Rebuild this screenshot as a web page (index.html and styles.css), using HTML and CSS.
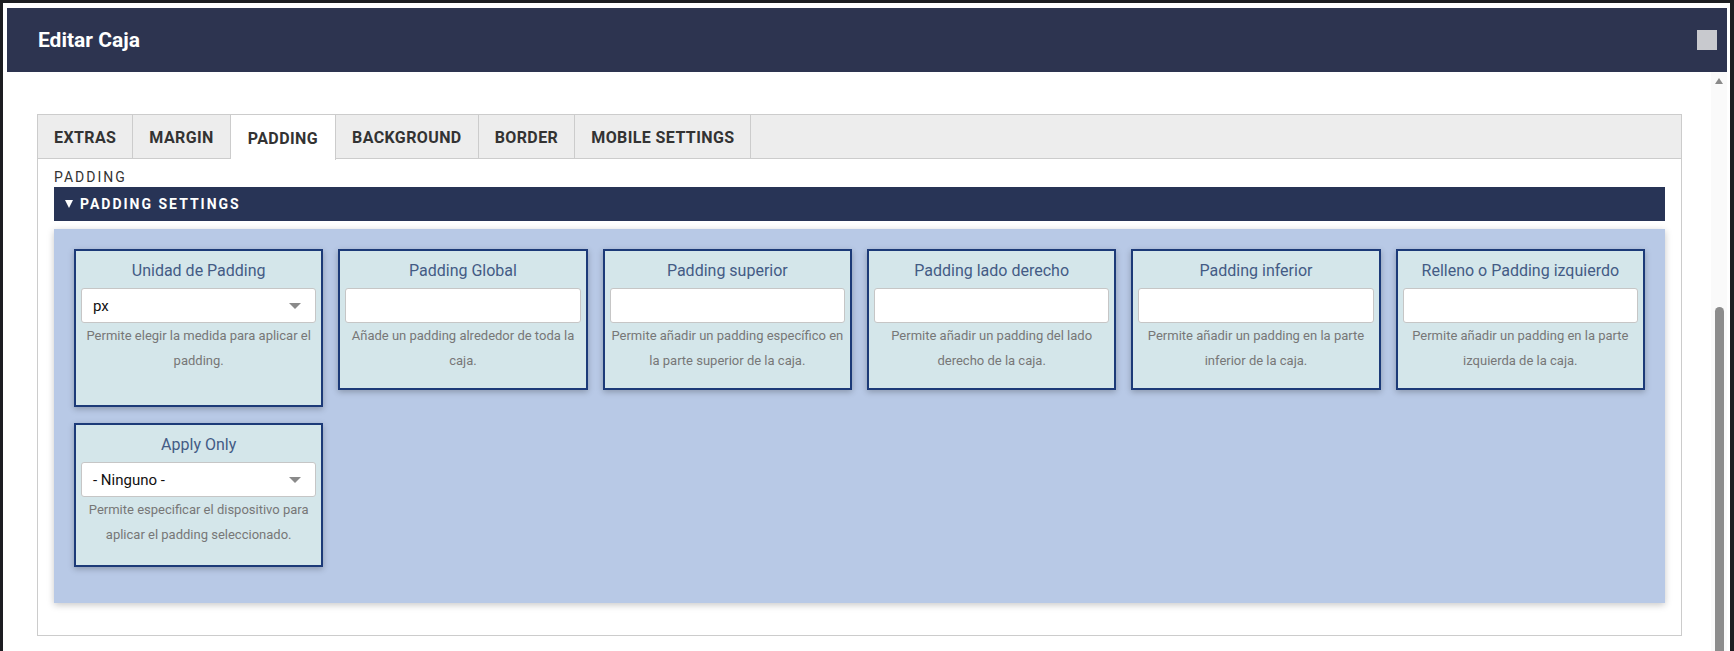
FILE: index.html
```html
<!DOCTYPE html>
<html lang="es">
  <head>
    <meta charset="UTF-8" />
    <title>Editar Caja</title>
    <link rel="stylesheet" href="styles.css">
  </head>
  <body>
    <div class="dialog">
      <!-- Header -->
      <div class="dialog-header">
        <h2>Editar Caja</h2>
        <span class="close-box"></span>
      </div>

      <div class="dialog-main">
        <div class="dialog-content">
          <div class="tabs-wrap">
            <ul class="tabs">
              <li class="tab">Extras</li>
              <li class="tab">Margin</li>
              <li class="tab active">Padding</li>
              <li class="tab">Background</li>
              <li class="tab">Border</li>
              <li class="tab">Mobile settings</li>
            </ul>

            <div class="tab-panel">
              <div class="section-label">Padding</div>
              <div class="summary"><span class="caret-down"></span>Padding settings</div>

              <!-- Fields -->
              <div class="fields">
                <div class="field tall">
                  <label>Unidad de Padding</label>
                  <div class="select"><span>px</span><span class="caret"></span></div>
                  <div class="desc">Permite elegir la medida para aplicar el padding.</div>
                </div>
                <div class="field">
                  <label>Padding Global</label>
                  <input type="text" class="input" />
                  <div class="desc">Añade un padding alrededor de toda la caja.</div>
                </div>
                <div class="field">
                  <label>Padding superior</label>
                  <input type="text" class="input" />
                  <div class="desc">Permite añadir un padding específico en la parte superior de la caja.</div>
                </div>
                <div class="field">
                  <label>Padding lado derecho</label>
                  <input type="text" class="input" />
                  <div class="desc">Permite añadir un padding del lado derecho de la caja.</div>
                </div>
                <div class="field">
                  <label>Padding inferior</label>
                  <input type="text" class="input" />
                  <div class="desc">Permite añadir un padding en la parte inferior de la caja.</div>
                </div>
                <div class="field">
                  <label>Relleno o Padding izquierdo</label>
                  <input type="text" class="input" />
                  <div class="desc">Permite añadir un padding en la parte izquierda de la caja.</div>
                </div>
                <div class="field with-select">
                  <label>Apply Only</label>
                  <div class="select"><span>- Ninguno -</span><span class="caret"></span></div>
                  <div class="desc">Permite especificar el dispositivo para aplicar el padding seleccionado.</div>
                </div>
              </div>
            </div>
          </div>
        </div>

        <div class="scrollbar">
          <span class="scroll-up"></span>
          <span class="thumb"></span>
        </div>
      </div>
    </div>
  </body>
</html>
```

FILE: styles.css
```css
body {
  margin: 0;
  height: 651px;
  overflow: hidden;
  background: #1c1d21;
  font-family: Roboto, "Noto Sans", sans-serif;
}

.dialog {
  margin: 3px 4px 0 3px;
  height: 648px;
  padding: 5px 3px 0 4px;
  box-sizing: border-box;
  background: #fff;
  display: flex;
  flex-direction: column;
}

.dialog-header {
  height: 64px;
  flex-shrink: 0;
  background: #2d3450;
  display: flex;
  align-items: center;
  justify-content: space-between;
  padding: 0 10px 0 31px;
}

.dialog-header h2 {
  margin: 0;
  font-size: 21px;
  font-weight: 700;
  color: #fff;
}

.close-box {
  width: 20px;
  height: 20px;
  background: #c8c9ce;
}

.dialog-main {
  flex: 1;
  display: flex;
  min-height: 0;
}

.dialog-content {
  flex: 1;
  padding: 42px 29px 0 30px;
}

/* Tabs */
.tabs-wrap {
  border: 1px solid #ccc;
}

.tabs {
  display: flex;
  margin: 0;
  padding: 0;
  list-style: none;
  height: 43px;
  background: #ededed;
  border-bottom: 1px solid #ccc;
}

.tab {
  display: flex;
  align-items: center;
  padding: 1px 16px 0;
  border-right: 1px solid #ccc;
  font-size: 16px;
  font-weight: 700;
  letter-spacing: 0.4px;
  color: #333;
  text-transform: uppercase;
}

.tab.active {
  background: #fff;
  height: 44px;
  padding: 1px 17px 0;
}

.tab-panel {
  padding: 9px 16px 32px;
}

.section-label {
  font-size: 14px;
  line-height: 19px;
  letter-spacing: 2px;
  color: #333;
  text-transform: uppercase;
}

.summary {
  height: 34px;
  display: flex;
  align-items: center;
  padding-left: 11px;
  background: #283456;
  color: #fff;
  font-size: 14px;
  font-weight: 700;
  letter-spacing: 2px;
  text-transform: uppercase;
}

.caret-down {
  width: 0;
  height: 0;
  border-left: 4.5px solid transparent;
  border-right: 4.5px solid transparent;
  border-top: 8px solid #fff;
  margin-right: 7px;
}

/* Field cards */
.fields {
  margin-top: 8px;
  padding: 20px 20px 36px;
  background: #b8c9e6;
  box-shadow: 0 2px 7px rgba(0, 0, 0, 0.22);
  display: grid;
  grid-template-columns: repeat(6, 1fr);
  column-gap: 15px;
  row-gap: 16px;
  align-items: start;
}

.field {
  background: #d4e6ea;
  border: 2px solid #1c3a78;
  box-shadow: 0 2px 6px rgba(0, 0, 0, 0.25);
  padding: 8px 5px 15px;
  text-align: center;
}

.field.tall {
  padding-bottom: 32px;
}

.field.with-select {
  padding-bottom: 18px;
}

.field label {
  display: block;
  font-size: 16px;
  line-height: 24px;
  color: #435b85;
  margin-bottom: 5px;
}

.input,
.select {
  display: block;
  width: 100%;
  height: 35px;
  box-sizing: border-box;
  margin: 0;
  border: 1px solid #c6c6c6;
  border-radius: 3px;
  background: #fff;
  font-family: inherit;
}

.select {
  display: flex;
  align-items: center;
  justify-content: space-between;
  padding: 0 14px 0 11px;
  font-size: 15px;
  color: #111;
  text-align: left;
}

.caret {
  width: 0;
  height: 0;
  border-left: 6px solid transparent;
  border-right: 6px solid transparent;
  border-top: 6px solid #8a8a8a;
}

.desc {
  font-size: 13px;
  line-height: 25px;
  color: #777;
}

/* Scrollbar */
.scrollbar {
  width: 16px;
  background: #fafafa;
  display: flex;
  flex-direction: column;
  align-items: center;
  padding-top: 6px;
}

.scroll-up {
  width: 0;
  height: 0;
  border-left: 4px solid transparent;
  border-right: 4px solid transparent;
  border-bottom: 6px solid #8a8a8a;
}

.thumb {
  width: 9px;
  flex: 1;
  margin-top: 223px;
  background: #8c8c8c;
  border-radius: 5px 5px 0 0;
}
```
